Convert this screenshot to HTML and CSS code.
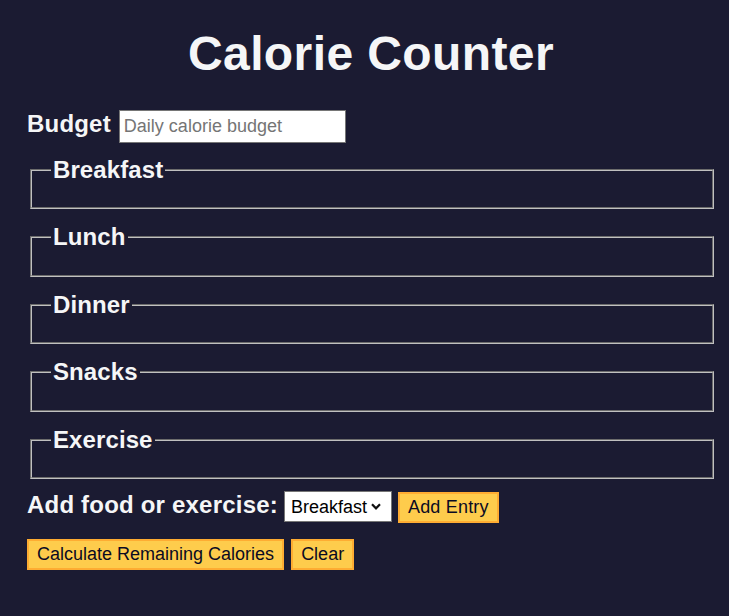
FILE: index.html
```html
<!DOCTYPE html>
<html lang="en">
<head>
<meta charset="utf-8">
<title>Calorie Counter</title>
<link rel="stylesheet" href="styles.css">
</head>
<body>
<main class="page">
  <h1 class="title">Calorie Counter</h1>
  <form class="calorie-form">
    <div class="budget-row">
      <label class="field-label" for="budget">Budget</label>
      <input class="budget-input" id="budget" type="number" placeholder="Daily calorie budget">
    </div>
    <fieldset class="meal"><legend class="meal-legend">Breakfast</legend><div class="input-container"></div></fieldset>
    <fieldset class="meal"><legend class="meal-legend">Lunch</legend><div class="input-container"></div></fieldset>
    <fieldset class="meal"><legend class="meal-legend">Dinner</legend><div class="input-container"></div></fieldset>
    <fieldset class="meal"><legend class="meal-legend">Snacks</legend><div class="input-container"></div></fieldset>
    <fieldset class="meal"><legend class="meal-legend">Exercise</legend><div class="input-container"></div></fieldset>
    <div class="controls">
      <label class="field-label" for="entry-dropdown">Add food or exercise:</label>
      <select class="entry-select" id="entry-dropdown">
        <option>Breakfast</option>
        <option>Lunch</option>
        <option>Dinner</option>
        <option>Snacks</option>
        <option>Exercise</option>
      </select>
      <button class="btn" type="button">Add Entry</button>
    </div>
    <div class="actions">
      <button class="btn" type="submit">Calculate Remaining Calories</button>
      <button class="btn" type="button">Clear</button>
    </div>
  </form>
</main>
</body>
</html>
```
FILE: styles.css
```css
body {
  margin: 0;
  background-color: #1b1b32;
  color: #f5f6f7;
  font-family: "Liberation Sans", Arial, sans-serif;
}

.page {
  margin-left: 27px;
  width: 688px;
  padding-top: 26px;
}

.title {
  margin: 0;
  font-size: 48px;
  line-height: 55px;
  font-weight: bold;
  letter-spacing: 0.4px;
  text-align: center;
}

.calorie-form {
  margin-top: 29px;
  font-size: 24px;
  display: flex;
  flex-direction: column;
}

.budget-row {
  display: flex;
  align-items: baseline;
  gap: 8px;
}

.field-label {
  font-weight: bold;
  letter-spacing: 0.2px;
}

.budget-input {
  box-sizing: border-box;
  width: 227px;
  height: 33px;
  padding: 0 4px;
  border: 1px solid #767676;
  border-radius: 0;
  background: #fff;
  color: #000;
  font-family: "Liberation Sans", Arial, sans-serif;
  font-size: 18px;
  -moz-appearance: textfield;
  appearance: textfield;
}

.budget-input::placeholder {
  color: #757575;
}

.meal {
  margin: 14px 1px 0 3px;
  padding: 0.35em 19px 0.625em;
  border: 2px groove rgb(192, 192, 192);
}

.budget-row + .meal {
  margin-top: 13px;
}

.meal-legend {
  font-weight: bold;
  letter-spacing: 0.1px;
  padding: 0 2px;
}

.controls {
  margin-top: 12px;
  display: flex;
  align-items: baseline;
  gap: 6px;
}

.entry-select {
  box-sizing: border-box;
  width: 108px;
  height: 31px;
  padding: 0 0 0 6px;
  border: 1px solid #767676;
  border-radius: 0;
  background-color: #fff;
  background-image: url("data:image/svg+xml,%3Csvg xmlns='http://www.w3.org/2000/svg' width='10' height='7' viewBox='0 0 10 7'%3E%3Cpath d='M1 1.2 L5 5.3 L9 1.2' fill='none' stroke='%23111' stroke-width='2.2'/%3E%3C/svg%3E");
  background-repeat: no-repeat;
  background-position: right 10px center;
  background-size: 10px 7px;
  color: #000;
  font-family: "Liberation Sans", Arial, sans-serif;
  font-size: 18px;
  -webkit-appearance: none;
  appearance: none;
}

.btn {
  padding: 3px 8px;
  border: 2px solid #feac32;
  border-radius: 0;
  background-color: #fecc4c;
  color: #0a0a23;
  font-family: "Liberation Sans", Arial, sans-serif;
  font-size: 18px;
  cursor: pointer;
}

.controls .btn {
  letter-spacing: 0.2px;
}

.actions {
  margin-top: 16px;
  display: flex;
  gap: 7px;
}
```
